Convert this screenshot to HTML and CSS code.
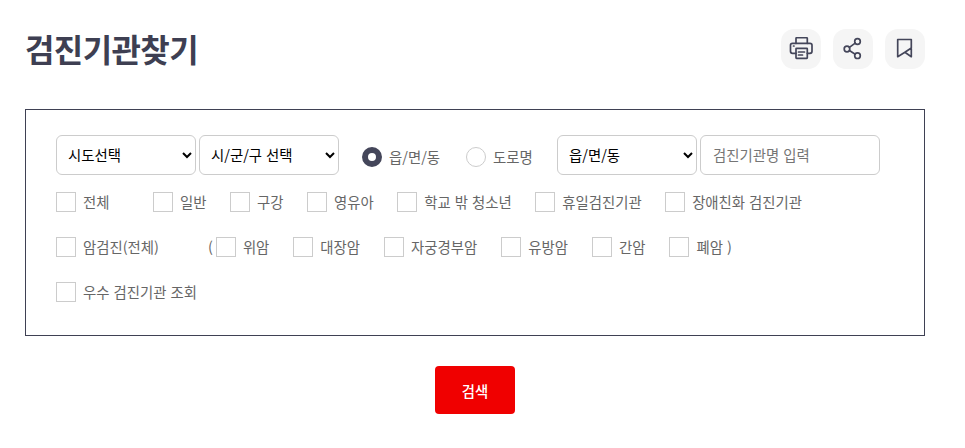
FILE: index.html
```html
<!DOCTYPE html>
<html lang="ko">
<head>
<meta charset="utf-8">
<title>검진기관찾기</title>
<link rel="stylesheet" href="styles.css">
</head>
<body>
<main class="page">
  <header class="head">
    <h1 class="title">검진기관찾기</h1>
    <div class="tools">
      <button class="tool" type="button" aria-label="인쇄">
        <svg viewBox="0 0 24 24" width="24" height="24" class="ico"><path d="M7 6.300V1.500a.8.8 0 0 1 .8-.8h9.700a.8.800 0 0 1 .8.8v4.800"/><path d="M7 16.300H3.500a2 2 0 0 1-2-2V8.300a2 2 0 0 1 2-2H21a2 2 0 0 1 2 2v6a2 2 0 0 1-2 2h-2.700"/><rect x="7" y="11.300" width="11.300" height="10" rx=".5"/><path d="M9.500 15h6M9.500 18h4M4.500 9h.5"/></svg>
      </button>
      <button class="tool" type="button" aria-label="공유">
        <svg viewBox="0 0 24 24" width="24" height="24" class="ico"><circle cx="16.500" cy="4.500" r="2.800"/><circle cx="6" cy="12" r="2.800"/><circle cx="16.500" cy="18.700" r="2.800"/><path d="M8.400 10.400l5.800-4.300M8.400 13.500l5.800 3.700"/></svg>
      </button>
      <button class="tool" type="button" aria-label="북마크">
        <svg viewBox="0 0 24 24" width="24" height="24" class="ico"><path d="M4.700 2.500h13.600v17.200l-6.400-4.400-7.200 4.400zM11.900 15.300l6.400-4.300"/></svg>
      </button>
    </div>
  </header>

  <form class="panel">
    <div class="search">
      <select class="field sel"><option>시도선택</option></select>
      <select class="field sel"><option>시/군/구 선택</option></select>
      <div class="radios">
        <label class="opt"><input class="radio" type="radio" name="addr" checked><span>읍/면/동</span></label>
        <label class="opt"><input class="radio" type="radio" name="addr"><span>도로명</span></label>
      </div>
      <select class="field sel"><option>읍/면/동</option></select>
      <input class="field name" type="text" placeholder="검진기관명 입력">
    </div>
    <div class="row row-main">
      <label class="opt wide"><input class="check" type="checkbox"><span>전체</span></label>
      <label class="opt"><input class="check" type="checkbox"><span>일반</span></label>
      <label class="opt"><input class="check" type="checkbox"><span>구강</span></label>
      <label class="opt"><input class="check" type="checkbox"><span>영유아</span></label>
      <label class="opt"><input class="check" type="checkbox"><span>학교 밖 청소년</span></label>
      <label class="opt"><input class="check" type="checkbox"><span>휴일검진기관</span></label>
      <label class="opt"><input class="check" type="checkbox"><span>장애친화 검진기관</span></label>
    </div>
    <div class="row">
      <label class="opt cancer"><input class="check" type="checkbox"><span>암검진(전체)</span></label>
      <div class="group">
        <span class="paren">(</span>
        <label class="opt"><input class="check" type="checkbox"><span>위암</span></label>
      </div>
      <label class="opt"><input class="check" type="checkbox"><span>대장암</span></label>
      <label class="opt"><input class="check" type="checkbox"><span>자궁경부암</span></label>
      <label class="opt"><input class="check" type="checkbox"><span>유방암</span></label>
      <label class="opt"><input class="check" type="checkbox"><span>간암</span></label>
      <label class="opt"><input class="check" type="checkbox"><span>폐암 )</span></label>
    </div>
    <div class="row">
      <label class="opt"><input class="check" type="checkbox"><span>우수 검진기관 조회</span></label>
    </div>
  </form>

  <div class="actions">
    <button class="submit" type="button">검색</button>
  </div>
</main>
</body>
</html>
```
FILE: styles.css
```css
* { box-sizing: border-box; }
html, body { margin: 0; padding: 0; background: #fff; }
body {
  font-family: "Noto Sans CJK KR", "Noto Sans", sans-serif;
  font-size: 14.4px;
  color: #666;
}
.page { width: 900px; margin-left: 25px; }
.head {
  display: flex;
  justify-content: space-between;
  align-items: center;
  height: 40px;
  margin-top: 29px;
}
.title {
  margin: 0;
  font-size: 32px;
  font-weight: 700;
  line-height: 38px;
  padding-bottom: 2px;
  letter-spacing: -0.6px;
  color: #3e3f52;
}
.tools { display: flex; gap: 12px; }
.tool {
  width: 40px;
  height: 40px;
  padding: 0;
  border: 0;
  border-radius: 13px;
  background: #f5f5f5;
  display: flex;
  align-items: center;
  justify-content: center;
}
.ico {
  fill: none;
  stroke: #44465a;
  stroke-width: 1.7;
  stroke-linejoin: round;
  stroke-linecap: round;
}
.panel {
  margin-top: 40px;
  height: 227px;
  padding: 25px 30px 0;
  border: 1px solid #3f4154;
}
.search { display: flex; align-items: center; height: 40px; }
.field {
  height: 40px;
  border: 1px solid #ccc;
  border-radius: 6px;
  background: #fff;
  font: inherit;
  color: #000;
}
.sel { width: 140px; padding: 0 8px 2px 7px; margin-right: 3px; }
.name { width: 180px; padding: 0 12px 1px; color: #666; }
.name::placeholder { color: #757575; }
.radios { display: flex; gap: 26px; width: 215px; padding: 4px 0 0 20px; }
.opt { display: inline-flex; align-items: center; gap: 7px; line-height: 20px; }
.radio {
  appearance: none;
  width: 20px;
  height: 20px;
  margin: 0;
  border: 1px solid #ccc;
  border-radius: 50%;
  background: #fff;
}
.radio:checked { border: 6px solid #44465a; }
.check {
  appearance: none;
  width: 20px;
  height: 20px;
  margin: 0;
  border: 1px solid #ccc;
  background: #fff;
}
.row { display: flex; align-items: center; gap: 24px; height: 20px; margin-top: 25px; }
.row-main { gap: 23.5px; }
.search + .row { margin-top: 17px; }
.wide { width: 73.5px; }
.cancer { width: 128px; }
.group { display: flex; align-items: center; gap: 3px; }
.paren { line-height: 20px; }
.actions { display: flex; justify-content: center; margin-top: 30px; }
.submit {
  width: 80px;
  height: 48px;
  border: 0;
  border-radius: 4px;
  background: #f00000;
  color: #fff;
  font: inherit;
  font-weight: 500;
}
```
